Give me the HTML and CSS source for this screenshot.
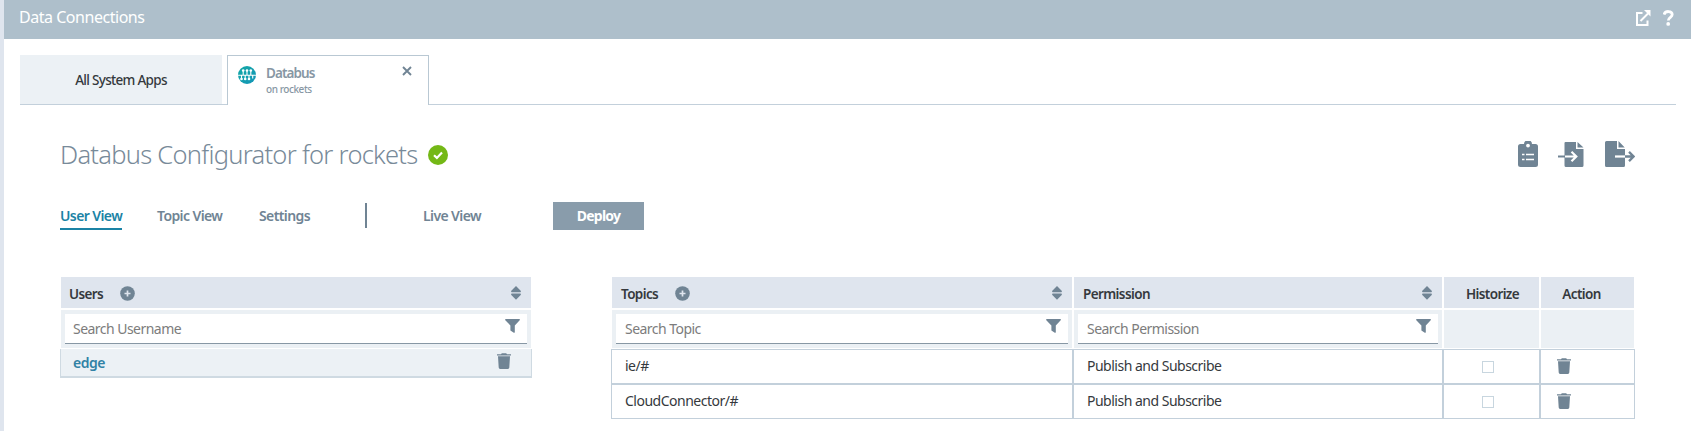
FILE: index.html
```html
<!DOCTYPE html>
<html lang="en">
<head>
<meta charset="utf-8">
<title>Data Connections</title>
<link rel="stylesheet" href="styles.css">
</head>
<body>
<svg class="sprite" width="0" height="0">
  <symbol id="trash" viewBox="0 0 14 16"><path d="M0 1.200h4L4.800.2h4.400l.8 1h4v1.300H0zM1 3.300h12l-.7 11.300q-.1 1.400-1.400 1.400H3.100q-1.300 0-1.400-1.400z"/></symbol>
  <symbol id="funnel" viewBox="0 0 15 14"><path d="M.7 0h13.600q1 .2.4 1.200L9.800 6.500v6.700q-.3.900-1 .5L5.400 11.400V6.500L.3 1.200Q-.2.300.7 0z"/></symbol>
  <symbol id="sort" viewBox="0 0 10 14"><path d="M5 0l4.700 4.700q.6 1.300-.5 1.500H.8Q-.3 6 .3 4.700zM.8 7.600h8.400q1.100.2.500 1.500L5 13.800.3 9.100Q-.3 7.800.8 7.600z"/></symbol>
  <symbol id="plus" viewBox="0 0 15 15"><circle cx="7.500" cy="7.500" r="7.300"/><path d="M7.500 4.500v6M4.500 7.500h6" stroke="#dfe5ee" stroke-width="1.700"/></symbol>
</svg>
<div class="app">
  <header class="topbar">
    <span class="topbar-title">Data Connections</span>
    <span class="topbar-icons">
      <svg width="16" height="17" viewBox="0 0 16 17" fill="none"><path d="M7.500 3H2v12h10.500v-4.500M5.500 11L13 3.500" fill="none" stroke="#fff" stroke-width="2"/><path d="M9 0h6.500v6.500z" fill="#fff"/></svg>
      <svg width="11" height="16" viewBox="0 0 11 16"><path d="M1 4.600C2 .4 9.200.6 9.200 4.600 9.200 7.400 5.300 7.200 5.300 10.600" fill="none" stroke="#fff" stroke-width="2.800"/><circle cx="5.200" cy="13.900" r="1.900" fill="#fff"/></svg>
    </span>
  </header>
  <nav class="tabs">
    <div class="tab tab-idle">All System Apps</div>
    <div class="tab-gap"></div>
    <div class="tab tab-active">
      <svg class="globe" width="18" height="18" viewBox="0 0 18 18">
        <defs><linearGradient id="teal" x2="1" y2="1"><stop stop-color="#13a8a4"/><stop offset="1" stop-color="#1495b8"/></linearGradient></defs>
        <circle cx="9" cy="9" r="9" fill="url(#teal)"/>
        <path d="M0 9.200h18M5.200 9V4.500M9 9V4.500M12.800 9V4.500M3.500 9v4M7.200 9v4M11 9v4M14.700 9v3.500" stroke="#fff" stroke-width="1.100"/>
        <g fill="#fff"><circle cx="5.200" cy="4.500" r="1.300"/><circle cx="9" cy="4.500" r="1.300"/><circle cx="12.800" cy="4.500" r="1.300"/><circle cx="3.500" cy="13" r="1.300"/><circle cx="7.200" cy="13" r="1.300"/><circle cx="11" cy="13" r="1.300"/></g>
      </svg>
      <div class="tab-text"><b>Databus</b><small>on rockets</small></div>
      <svg class="close" width="10" height="10" viewBox="0 0 10 10"><path d="M1 1l8 8M9 1L1 9" stroke="#708494" stroke-width="1.900"/></svg>
    </div>
    <div class="tab-rest"></div>
  </nav>
  <main>
    <div class="heading">
      <h1>Databus Configurator for rockets</h1>
      <svg width="20" height="20" viewBox="0 0 20 20"><circle cx="10" cy="10" r="10" fill="#74b816"/><path d="M6 10.200l2.900 2.700L14 7.600" fill="none" stroke="#fff" stroke-width="2.200"/></svg>
      <div class="tools">
        <svg width="20" height="26" viewBox="0 0 20 26"><path d="M2.500 3H6a4 3.600 0 0 1 8 0h3.500Q20 3 20 5.500v18q0 2.500-2.500 2.500h-15Q0 26 0 23.500v-18Q0 3 2.500 3z"/><circle cx="10" cy="4.600" r="1.900" fill="#fff"/><path d="M4 13.500h2.500M8 13.500h8M4 18.500h2.500M8 18.500h8" stroke="#fff" stroke-width="1.600"/></svg>
        <svg class="import" width="26" height="26" viewBox="0 0 26 26"><path d="M7.500 1H18v7h7.500v16.500q0 1.500-1.500 1.500H8q-1.500 0-1.500-1.500V2q0-1 1-1zM19.500 1l6 5.600h-6z"/><path d="M0 15.500h7" stroke="#708494" stroke-width="2"/><path d="M7 15.500h11M13.500 10.800l4.800 4.700-4.800 4.700" stroke="#fff" stroke-width="2.200" fill="none"/></svg>
        <svg width="30" height="26" viewBox="0 0 30 26"><path d="M1.500 0H12v8h8v16.500q0 1.500-1.500 1.500h-17Q0 26 0 24.500v-23Q0 0 1.500 0zM13.500 0l6.200 6.500h-6.200z"/><path d="M10 15.500h10" stroke="#fff" stroke-width="2.200"/><path d="M20 15.500h8M24 10.900l4.600 4.600-4.600 4.600" stroke="#708494" stroke-width="2.300" fill="none"/></svg>
      </div>
    </div>
    <div class="views">
      <a class="view current">User View</a>
      <a class="view topic">Topic View</a>
      <a class="view settings">Settings</a>
      <i class="divider"></i>
      <a class="view live">Live View</a>
      <button class="deploy">Deploy</button>
    </div>
    <div class="tables">
      <section class="table users">
        <div class="th">Users<svg class="plus"><use href="#plus"/></svg><svg class="sort"><use href="#sort"/></svg></div>
        <div class="filter"><div class="input"><span>Search Username</span><svg class="funnel"><use href="#funnel"/></svg></div></div>
        <div class="user-row"><b>edge</b><svg class="trash"><use href="#trash"/></svg></div>
      </section>
      <section class="topics-wrap">
        <div class="table topics">
          <div class="th">Topics<svg class="plus"><use href="#plus"/></svg><svg class="sort"><use href="#sort"/></svg></div>
          <div class="th">Permission<svg class="sort"><use href="#sort"/></svg></div>
          <div class="th center">Historize</div>
          <div class="th center action">Action</div>
          <div class="filter"><div class="input"><span>Search Topic</span><svg class="funnel"><use href="#funnel"/></svg></div></div>
          <div class="filter"><div class="input"><span>Search Permission</span><svg class="funnel"><use href="#funnel"/></svg></div></div>
          <div class="filter"></div>
          <div class="filter"></div>
        </div>
        <div class="row first">
          <div class="td">ie/#</div><div class="td">Publish and Subscribe</div><div class="td check"><i></i></div><div class="td last"><svg class="trash"><use href="#trash"/></svg></div>
        </div>
        <div class="row">
          <div class="td">CloudConnector/#</div><div class="td">Publish and Subscribe</div><div class="td check"><i></i></div><div class="td last"><svg class="trash"><use href="#trash"/></svg></div>
        </div>
      </section>
    </div>
  </main>
</div>
</body>
</html>
```
FILE: styles.css
```css
* { box-sizing: border-box; }
body { margin: 0; background: #fff; font: 14px/20px "Noto Sans", "Open Sans", sans-serif; color: #35393d; overflow: hidden; }
svg { display: block; flex: none; fill: #708494; }
.sprite { position: absolute; }
.app { height: 431px; border-left: 4px solid #dfe5ee; }
.topbar { height: 39px; background: #aebfcb; display: flex; align-items: center; justify-content: space-between; padding: 0 17px 3px 15px; color: #fff; }
.topbar-title { font-size: 16px; margin-top: -2px; letter-spacing: -.47px; }
.topbar-icons { display: flex; gap: 12px; align-items: center; }
.tabs { display: flex; margin: 16px 15px 0 16px; height: 50px; }
.tab-idle { width: 202px; background: #ecf1f5; border-bottom: 1px solid #c3d0db; display: flex; align-items: center; justify-content: center; font-size: 13.500px; font-weight: 500; letter-spacing: -.7px; }
.tab-gap { width: 5px; border-bottom: 1px solid #c3d0db; }
.tab-active { width: 202px; border: 1px solid #b9c8d3; border-bottom: 0; display: flex; align-items: flex-start; padding: 10px 16px 0 10px; color: #8797a4; }
.tab-text { margin: -3px 0 0 10px; display: flex; flex-direction: column; flex: 1; }
.tab-text b { font-size: 13.500px; font-weight: 600; line-height: 20px; letter-spacing: -.9px; }
.tab-text small { font-size: 10px; line-height: 12px; font-weight: 500; letter-spacing: -.43px; }
.tab-rest { flex: 1; border-bottom: 1px solid #c3d0db; }
main { padding: 0 56px 0 56px; }
.heading { height: 62px; margin-top: 19px; display: flex; align-items: center; }
h1 { margin: -3px 0 0; font-size: 25.500px; line-height: 34px; font-weight: 300; color: #788a99; width: 368px; white-space: nowrap; letter-spacing: -.73px; }
.tools { display: flex; margin: -3px 0 0 auto; gap: 20px; }
.import { margin-right: 1px; }
.views { display: flex; align-items: flex-start; height: 28px; margin-top: 16px; color: #708494; font-weight: 600; white-space: nowrap; letter-spacing: -.6px; }
.view { height: 28px; padding-top: 4px; }
.current { width: 62px; color: #1b83a5; border-bottom: 2px solid #1b83a5; }
.topic { margin-left: 35px; width: 102px; }
.settings { width: 106px; }
.divider { width: 2px; height: 25px; margin-top: 1px; background: #708494; }
.live { margin-left: 56px; width: 130px; }
.deploy { width: 91px; height: 28px; border: 0; padding: 0; background: #899cab; color: #fff; font: inherit; font-weight: 700; letter-spacing: -.8px; }
.tables { display: flex; align-items: flex-start; gap: 79px; margin-top: 47px; }
.users { width: 472px; }
.table { display: grid; row-gap: 2px; }
.th { height: 31px; background: #dfe5ee; display: flex; align-items: center; padding: 2px 10px 0 8px; font-size: 13.500px; font-weight: 600; letter-spacing: -.6px; }
.plus { width: 15px; height: 15px; margin: -1px 0 0 17px; }
.sort { width: 10px; height: 14px; margin: -1px 0 0 auto; }
.center { justify-content: center; padding-left: 12px; }
.action { padding-left: 0; padding-right: 12px; }
.filter { height: 38px; background: #ebf0f4; padding: 4px 4px 0; }
.input { height: 30px; background: #fff; border-bottom: 1px solid #8797a4; display: flex; justify-content: space-between; align-items: center; padding: 0 7px 0 8px; color: #7c7c7c; letter-spacing: -.53px; }
.funnel { width: 15px; height: 14px; margin-top: -6px; }
.users .th, .users .filter { margin: 0 1px; }
.topics .th { padding-left: 9px; }
.topics .center { padding-left: 12px; }
.topics .action { padding-left: 0; }
.topics .input { padding-left: 9px; }
.user-row { height: 29px; margin-top: -1px; background: #ecf1f5; border: solid #cfdae2; border-width: 0 1px 2px; display: flex; align-items: center; justify-content: space-between; padding: 0 20px 0 12px; color: #3182a5; }
.user-row b { font-weight: 600; letter-spacing: -.5px; }
.trash { width: 14px; height: 16px; }
.user-row .trash { margin-top: -4px; }
.topics-wrap { width: 1024px; }
.topics { grid-template-columns: 460px 368px 95px 93px; column-gap: 2px; margin-left: 1px; }
.row { display: grid; grid-template-columns: 462px 370px 97px 94px; height: 34px; border-left: 1px solid #c3d0db; border-bottom: 1px solid #c3d0db; }
.first { margin-top: 1px; height: 36px; border-top: 1px solid #c3d0db; border-bottom-width: 2px; }
.td { border-right: 2px solid #c3d0db; display: flex; align-items: center; padding: 0 0 2px 13px; letter-spacing: -.5px; }
.last { border-right-width: 1px; padding-left: 16px; }
.check { justify-content: center; padding: 0 8px 0 0; }
.check i { width: 12px; height: 12px; border: 1px solid #c8d6df; }
```
